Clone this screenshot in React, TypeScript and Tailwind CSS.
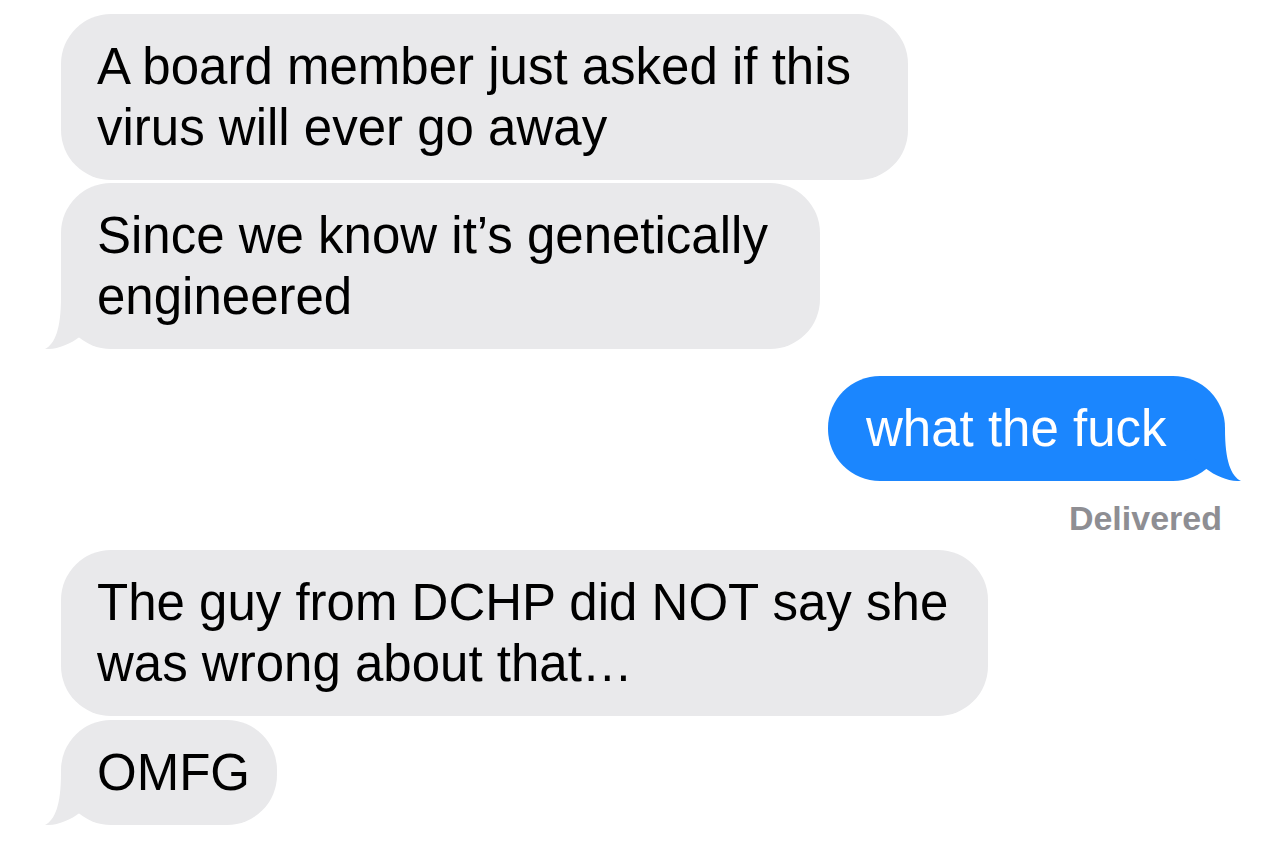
const GRAY = 'bg-[#e9e9eb]'

function Tail({ side }: { side: 'left' | 'right' }) {
  // iMessage style tail, drawn at the bubble's bottom corner
  const pos = side === 'left' ? 'left-[-17px]' : 'right-[-17px] -scale-x-100'
  const fill = side === 'left' ? '#e9e9eb' : '#1b86fe'
  return (
    <svg
      className={`absolute bottom-0 ${pos}`}
      width="70"
      height="60"
      viewBox="0 0 70 60"
      aria-hidden
    >
      <path d="M17,8 C17,40 11,55 1,60 C13,60.5 25,56 37,47 L67,20 L67,8 Z" fill={fill} />
    </svg>
  )
}

function Incoming({
  lines,
  width,
  tail,
}: {
  lines: string[]
  width: string
  tail?: boolean
}) {
  return (
    <div
      className={`relative ${width} ${GRAY} rounded-[50px] pl-[36px] py-[22px] text-[51px] leading-[61px] text-black whitespace-nowrap`}
    >
      {tail && <Tail side="left" />}
      <div className="relative">
        {lines.map((l) => (
          <div key={l}>{l}</div>
        ))}
      </div>
    </div>
  )
}

export default function App() {
  return (
    <div
      className="w-[1284px] h-[851px] bg-white overflow-hidden flex flex-col"
      style={{ fontFamily: '"Liberation Sans", Arial, sans-serif' }}
    >
      <div className="flex flex-col items-start pl-[61px] pt-[14px] gap-[3px]">
        <Incoming
          width="w-[847px]"
          lines={['A board member just asked if this', 'virus will ever go away']}
        />
        <Incoming
          width="w-[759px]"
          lines={['Since we know it’s genetically', 'engineered']}
          tail
        />
      </div>

      <div className="flex flex-col items-end mt-[27px]">
        <div className="relative mr-[59px] w-[397px] rounded-[52px] bg-[#1b86fe] pl-[38px] py-[22px] text-[51px] leading-[61px] text-white whitespace-nowrap">
          <Tail side="right" />
          <div className="relative">what the fuck</div>
        </div>
        <div className="mr-[62px] mt-[17px] text-[34px] leading-[40px] font-semibold text-[#8e8e93]">
          Delivered
        </div>
      </div>

      <div className="flex flex-col items-start pl-[61px] mt-[12px] gap-[4px]">
        <Incoming
          width="w-[927px]"
          lines={['The guy from DCHP did NOT say she', 'was wrong about that…']}
        />
        <Incoming width="w-[216px]" lines={['OMFG']} tail />
      </div>
    </div>
  )
}
